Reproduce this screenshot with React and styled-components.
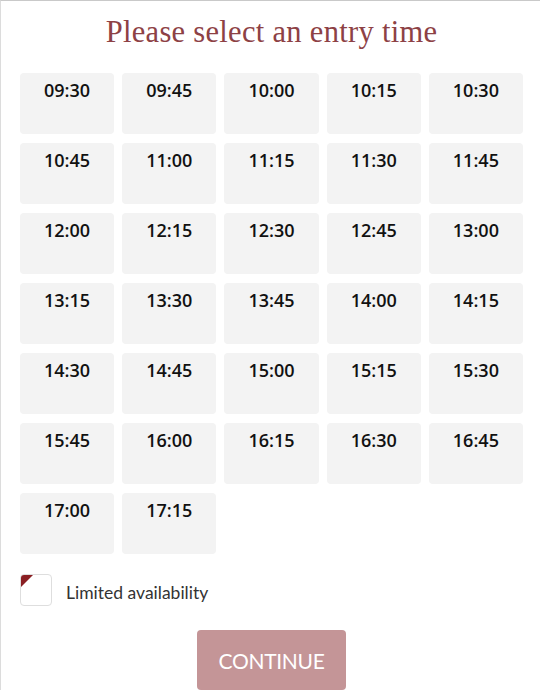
import React from "react";
import styled, { createGlobalStyle } from "styled-components";

const Global = createGlobalStyle`
  html, body { margin: 0; padding: 0; background: #ffffff; }
  body { width: 540px; height: 690px; overflow: hidden; }
`;

const Panel = styled.div`
  box-sizing: border-box;
  width: 560px;
  height: 700px;
  border-top: 1px solid #c9c9c9;
  border-left: 1px solid #dcdcdc;
  padding: 0 0 0 19px;
  display: flex;
  flex-direction: column;
`;

const Inner = styled.div`
  width: 503px;
  display: flex;
  flex-direction: column;
  align-items: center;
`;

const Title = styled.h1`
  margin: 12px 0 0;
  font-family: "Liberation Serif", "DejaVu Serif", serif;
  font-weight: 400;
  font-size: 30.5px;
  line-height: 38px;
  color: #8d4145;
  letter-spacing: 0.3px;
`;

const Grid = styled.div`
  margin-top: 22px;
  width: 100%;
  display: grid;
  grid-template-columns: repeat(5, 1fr);
  column-gap: 8px;
  row-gap: 9px;
`;

const Slot = styled.button`
  height: 61px;
  border: none;
  border-radius: 4px;
  background: #f3f3f3;
  padding: 5px 0 0;
  display: flex;
  justify-content: center;
  align-items: flex-start;
  font-family: "Open Sans", "Liberation Sans", sans-serif;
  font-weight: 600;
  font-size: 18px;
  line-height: 24px;
  color: #111;
  cursor: pointer;
`;

const Legend = styled.div`
  margin-top: 20px;
  align-self: flex-start;
  display: flex;
  align-items: center;
  gap: 14px;
`;

const Marker = styled.span`
  position: relative;
  box-sizing: border-box;
  width: 32px;
  height: 32px;
  border: 1px solid #dedede;
  border-radius: 4px;
  overflow: hidden;
  &::before {
    content: "";
    position: absolute;
    top: 0;
    left: 0;
    border-top: 12px solid #8a1f23;
    border-right: 12px solid transparent;
  }
`;

const LegendText = styled.span`
  padding-top: 4px;
  font-family: "Lato", "Liberation Sans", sans-serif;
  font-size: 17.5px;
  color: #333;
`;

const Continue = styled.button`
  margin-top: 24px;
  width: 149px;
  height: 60px;
  border: none;
  border-radius: 4px;
  background: #c49597;
  color: #ffffff;
  font-family: "Lato", "Liberation Sans", sans-serif;
  font-size: 21px;
  letter-spacing: -0.3px;
  cursor: pointer;
`;

const times = [];
for (let m = 9 * 60 + 30; m <= 17 * 60 + 15; m += 15) {
  const h = String(Math.floor(m / 60)).padStart(2, "0");
  const mm = String(m % 60).padStart(2, "0");
  times.push(`${h}:${mm}`);
}

export default function App() {
  return (
    <>
      <Global />
      <Panel>
        <Inner>
          <Title>Please select an entry time</Title>
          <Grid>
            {times.map((t) => (
              <Slot key={t}>{t}</Slot>
            ))}
          </Grid>
          <Legend>
            <Marker />
            <LegendText>Limited availability</LegendText>
          </Legend>
          <Continue>CONTINUE</Continue>
        </Inner>
      </Panel>
    </>
  );
}
